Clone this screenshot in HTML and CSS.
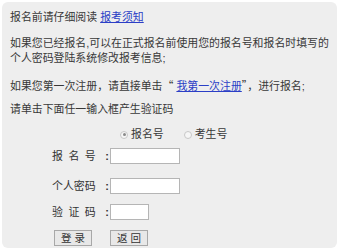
FILE: index.html
```html
<!DOCTYPE html>
<html lang="zh-CN">
<head>
<meta charset="utf-8">
<title>报名</title>
<link rel="stylesheet" href="styles.css">
</head>
<body>
<div class="panel">
  <p class="p1">报名前请仔细阅读 <a href="#">报考须知</a></p>
  <p class="p2">如果您已经报名,可以在正式报名前使用您的报名号和报名时填写的个人密码登陆系统修改报考信息;</p>
  <p class="p3">如果您第一次注册，请直接单击<span class="cjk">“</span> <a href="#">我第一次注册</a><span class="cjk">”</span>，进行报名;</p>
  <p class="p4">请单击下面任一输入框产生验证码</p>
  <div class="form">
    <div class="radios">
      <label class="radio"><input type="radio" name="t" checked><span>报名号</span></label>
      <label class="radio"><input type="radio" name="t"><span>考生号</span></label>
    </div>
    <div class="row r1">
      <span class="lbl"><span class="spread">报名号</span><span class="colon">:</span></span>
      <input class="field" type="text">
    </div>
    <div class="row r2">
      <span class="lbl"><span>个人密码</span><span class="colon">:</span></span>
      <input class="field" type="password">
    </div>
    <div class="row r3">
      <span class="lbl"><span class="spread">验证码</span><span class="colon">:</span></span>
      <input class="field short" type="text">
    </div>
    <div class="buttons">
      <button class="btn">登 录</button>
      <button class="btn">返 回</button>
    </div>
  </div>
</div>
</body>
</html>
```
FILE: styles.css
```css
html, body {
  margin: 0;
  padding: 0;
  background: #ffffff;
}
body {
  font-family: "Liberation Sans", "Noto Sans CJK SC", sans-serif;
  font-size: 10.9px;
  line-height: 15px;
  color: #383838;
}
.panel {
  margin: 2px 4px 2px 2px;
  height: 246px;
  box-sizing: border-box;
  background: #eeeeee;
  border-radius: 6px;
  padding: 8px 2px 0 8px;
}
p {
  margin: 0;
}
a {
  color: #2b3ec6;
  text-decoration: underline;
}
.cjk {
  font-family: "Noto Sans CJK SC", sans-serif;
}
.p2 {
  margin-top: 11px;
}
.p3 { margin-top: 12px; }
.p4 { margin-top: 8px; }
.form {
  margin-top: 10px;
  padding-left: 42px;
  display: flex;
  flex-direction: column;
}
.radios {
  display: flex;
  gap: 20px;
  padding-left: 68px;
  height: 15px;
  align-items: center;
}
.radio {
  display: flex;
  align-items: center;
  gap: 3px;
}
.radio input {
  appearance: none;
  -webkit-appearance: none;
  margin: 0;
  width: 8px;
  height: 8px;
  border: 1px solid #c8c8c8;
  border-radius: 50%;
  background: #f6f6f6;
  box-sizing: border-box;
  position: relative;
}
.radio input:checked::after {
  content: "";
  position: absolute;
  left: 1.5px;
  top: 1.5px;
  width: 3px;
  height: 3px;
  border-radius: 50%;
  background: #8a8a8a;
}
.row {
  display: flex;
  align-items: center;
  height: 16px;
}
.r1 { margin-top: 6px; }
.r2 { margin-top: 14px; }
.r3 { margin-top: 10px; }
.lbl {
  width: 58px;
  display: flex;
  justify-content: space-between;
  white-space: nowrap;
  color: #333333;
}
.lbl > span {
  flex-shrink: 0;
}
.spread {
  letter-spacing: 5.5px;
}
.colon {
  width: 6px;
  text-align: center;
  font-weight: bold;
}
.field {
  width: 70px;
  height: 16px;
  box-sizing: border-box;
  border: 1px solid #b5b5b5;
  background: #ffffff;
  margin: 0;
  padding: 0;
}
.field.short {
  width: 39px;
}
.buttons {
  display: flex;
  gap: 18px;
  margin-top: 10px;
  padding-left: 2px;
}
.btn {
  width: 38px;
  height: 16px;
  box-sizing: border-box;
  border: 1px solid #a8a8a8;
  background: #e8e8e8;
  font-family: inherit;
  font-size: 10.5px;
  line-height: 12px;
  color: #333333;
  padding: 0;
  margin: 0;
  border-radius: 0;
}
```
